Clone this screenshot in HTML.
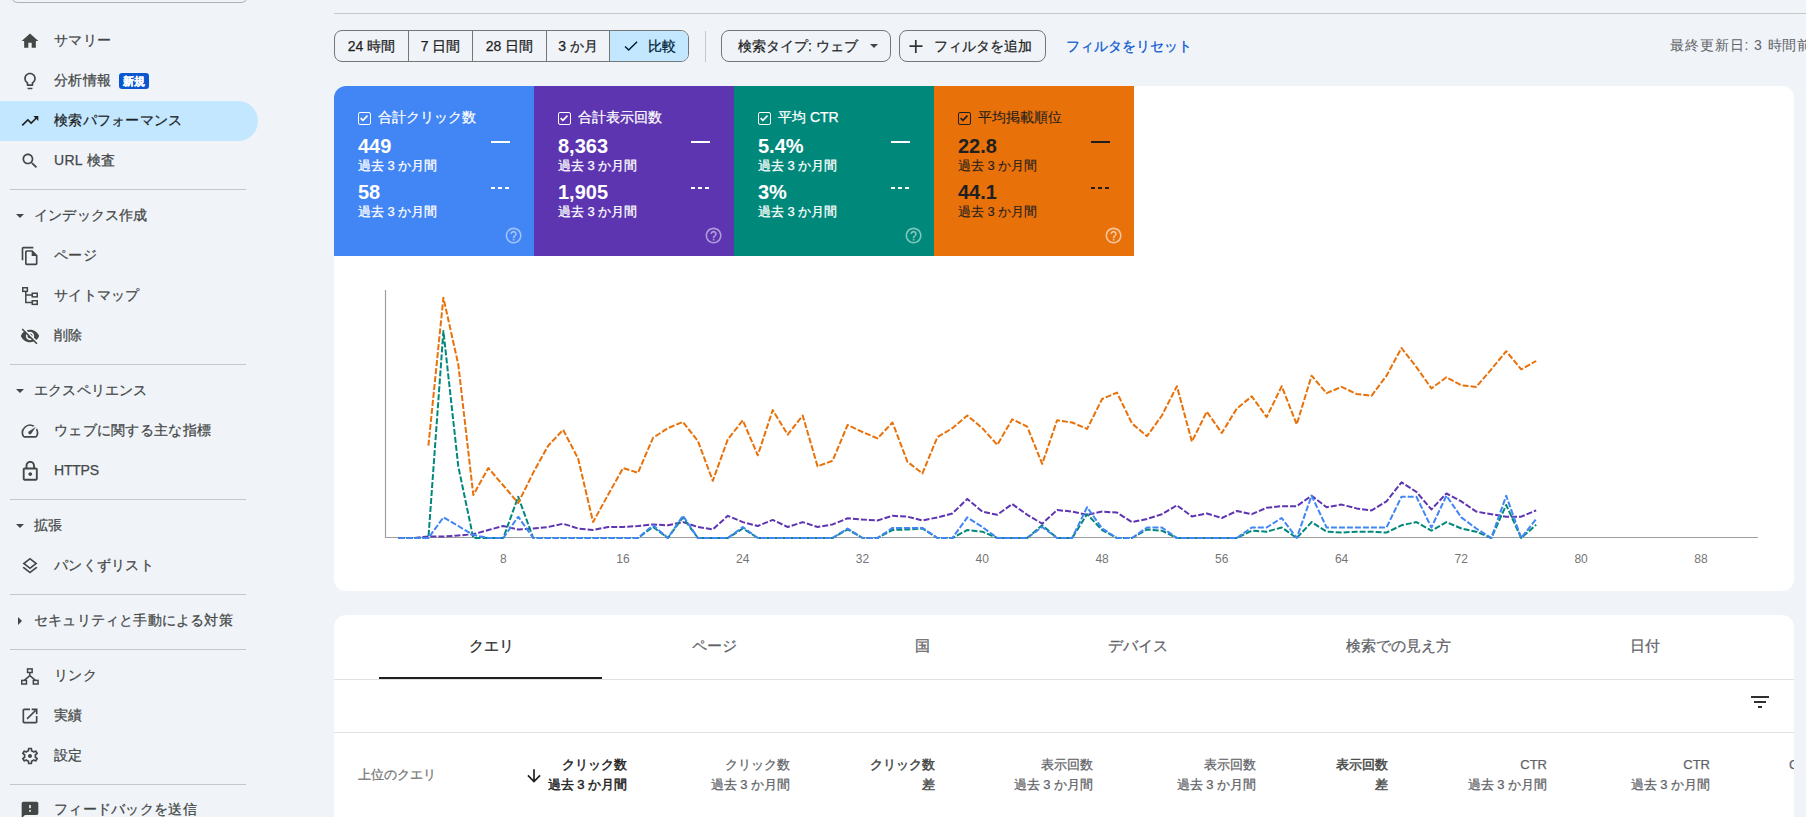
<!DOCTYPE html>
<html><head><meta charset="utf-8">
<style>
*{box-sizing:border-box}
html,body{margin:0;padding:0}
body{width:1806px;height:817px;overflow:hidden;position:relative;background:#f0f4f9;font-family:"Liberation Sans",sans-serif;color:#1f1f1f;-webkit-text-stroke-width:0.25px}
.abs{position:absolute}
.ic{position:absolute}
.topbox{position:absolute;left:10px;top:-40px;width:239px;height:43px;border:1px solid #aeb1ae;border-radius:8px}
.sep{position:absolute;left:10px;width:236px;height:1px;background:#c7c7c7}
.nitem{position:absolute;left:0;width:258px;height:40px}
.nitem.active{background:#c2e7ff;border-radius:0 20px 20px 0}
.nt{position:absolute;left:54px;top:-1px;line-height:40px;font-size:14px;color:#444746;white-space:nowrap;letter-spacing:0.3px}
.active .nt{color:#1f1f1f}
.badge{position:absolute;left:119px;top:12px;width:30px;height:16px;line-height:16px;text-align:center;background:#0b57d0;color:#fff;font-size:11px;font-weight:bold;border-radius:3px}
.nhead{position:absolute;left:0;width:258px;height:40px}
.nhead span{position:absolute;left:34px;top:0;line-height:40px;font-size:14px;color:#444746;white-space:nowrap;letter-spacing:0.2px}
.tri-d{position:absolute;left:16px;top:19px;width:0;height:0;border-left:4px solid transparent;border-right:4px solid transparent;border-top:4px solid #444746}
.tri-r{position:absolute;left:18px;top:17px;width:0;height:0;border-top:4px solid transparent;border-bottom:4px solid transparent;border-left:4px solid #444746}

.topline{position:absolute;left:334px;top:13px;width:1472px;height:1px;background:#c7c7c7}
.seg{position:absolute;top:30px;height:32px;border:1px solid #747775;border-radius:8px;overflow:hidden;display:flex}
.seg div{height:30px;line-height:30px;font-size:14px;color:#1f1f1f;text-align:center;border-right:1px solid #747775;white-space:nowrap;position:relative}
.seg div:last-child{border-right:none}
.btn{position:absolute;top:30px;height:32px;border:1px solid #747775;border-radius:8px;line-height:30px;font-size:14px;color:#1f1f1f;white-space:nowrap}
.vsep{position:absolute;left:705px;top:31px;width:1px;height:31px;background:#c7c7c7}
.link{position:absolute;left:1066px;top:30px;line-height:32px;font-size:14px;color:#0b57d0;white-space:nowrap}
.upd{position:absolute;left:1670px;top:29px;line-height:32px;font-size:14px;color:#5f6368;white-space:nowrap;-webkit-text-stroke-width:0;letter-spacing:0.9px}

.card{position:absolute;background:#fff;border-radius:12px}
.tile{position:absolute;top:86px;width:200px;height:170px;color:#fff}
.tile .cb{position:absolute;left:24px;top:26px;width:13px;height:13px;border:1.5px solid #fff;border-radius:2px}
.tile .cb svg{position:absolute;left:0;top:0}
.tile .tt{position:absolute;left:44px;top:21px;line-height:20px;font-size:14px;white-space:nowrap}
.tile .v{position:absolute;left:24px;line-height:24px;font-size:20px;font-weight:bold;white-space:nowrap;-webkit-text-stroke-width:0}
.tile .s{position:absolute;left:24px;line-height:16px;font-size:13px;white-space:nowrap}
.tile .l1{position:absolute;left:157px;top:55px;width:19px;height:2px;background:#fff}
.tile .l2{position:absolute;left:157px;top:101px;width:19px;height:2px;background:repeating-linear-gradient(90deg,#fff 0 4px,transparent 4px 7px)}
.tile .hp{position:absolute;left:169.6px;top:140px;fill:rgba(255,255,255,.5)}
.tile.dark{color:#1f1f1f}
.tile.dark .cb{border-color:#1f1f1f}
.tile.dark .tt,.tile.dark .s{-webkit-text-stroke-width:0.1px}
.tile.dark .l1{background:#1f1f1f}
.tile.dark .l2{background:repeating-linear-gradient(90deg,#1f1f1f 0 4px,transparent 4px 7px)}
.tile.dark .hp{fill:rgba(255,255,255,.6)}

svg.chart{position:absolute;left:0;top:0}
svg.chart text{font-family:"Liberation Sans",sans-serif;font-size:12px;fill:#757575;-webkit-text-stroke-width:0}

.tab{position:absolute;top:626px;height:40px;line-height:40px;font-size:15px;color:#5f6368;white-space:nowrap;text-align:center;width:300px}
.tab.on{color:#1f1f1f}
.uline{position:absolute;left:379px;top:677px;width:223px;height:2px;background:#202020}
.hline{position:absolute;left:334px;width:1460px;height:1px;background:#e0e0e0}
.th{position:absolute;top:755px;font-size:13px;line-height:20px;text-align:right;color:#5f6368;white-space:nowrap}
.th.b{color:#444746;-webkit-text-stroke-width:0.45px}
.th.b1{color:#1f1f1f;-webkit-text-stroke-width:0.45px}
</style></head><body>
<div class="topbox"></div>
<div class="nitem" style="top:21px"><svg class="ic" style="left:20px;top:10px" width="20" height="20" viewBox="0 0 24 24" fill="#444746"><path d="M10 20v-6h4v6h5v-8h3L12 3 2 12h3v8z"/></svg><span class="nt">サマリー</span></div>
<div class="nitem" style="top:61px"><svg class="ic" style="left:20px;top:10px" width="20" height="20" viewBox="0 0 24 24" fill="#444746"><path d="M9 21c0 .55.45 1 1 1h4c.55 0 1-.45 1-1v-1H9v1zm3-19C8.14 2 5 5.14 5 9c0 2.38 1.19 4.47 3 5.74V17c0 .55.45 1 1 1h6c.55 0 1-.45 1-1v-2.26c1.81-1.27 3-3.36 3-5.74 0-3.86-3.14-7-7-7zm2.85 11.1l-.85.6V16h-4v-2.3l-.85-.6C7.8 12.16 7 10.63 7 9c0-2.76 2.24-5 5-5s5 2.24 5 5c0 1.63-.8 3.16-2.15 4.1z"/></svg><span class="nt">分析情報</span><span class="badge">新規</span></div>
<div class="nitem active" style="top:101px"><svg class="ic" style="left:20px;top:10px" width="20" height="20" viewBox="0 0 24 24" fill="#1f1f1f"><path d="M16 6l2.29 2.29-4.88 4.88-4-4L2 16.59 3.41 18l6-6 4 4 6.3-6.29L22 12V6z"/></svg><span class="nt">検索パフォーマンス</span></div>
<div class="nitem" style="top:141px"><svg class="ic" style="left:20px;top:10px" width="20" height="20" viewBox="0 0 24 24" fill="#444746"><path d="M15.5 14h-.79l-.28-.27C15.41 12.59 16 11.11 16 9.5 16 5.91 13.09 3 9.5 3S3 5.91 3 9.5 5.91 16 9.5 16c1.61 0 3.09-.59 4.23-1.57l.27.28v.79l5 4.99L20.49 19l-4.99-5zm-6 0C7.01 14 5 11.99 5 9.5S7.01 5 9.5 5 14 7.01 14 9.5 11.99 14 9.5 14z"/></svg><span class="nt">URL 検査</span></div>
<div class="sep" style="top:189px"></div>
<div class="nhead" style="top:195px"><div class="tri-d"></div><span>インデックス作成</span></div>
<div class="nitem" style="top:236px"><svg class="ic" style="left:20px;top:10px" width="20" height="20" viewBox="0 0 24 24" fill="#444746"><path d="M16 1H4c-1.1 0-2 .9-2 2v14h2V3h12V1zm-1 4H8c-1.1 0-1.99.9-1.99 2L6 21c0 1.1.89 2 1.99 2H19c1.1 0 2-.9 2-2V11l-6-6zM8 21V7h6v5h5v9H8z"/></svg><span class="nt">ページ</span></div>
<div class="nitem" style="top:276px"><svg class="ic" style="left:20px;top:10px" width="20" height="20" viewBox="0 0 20 20" fill="#444746" stroke="#444746"><g fill="none" stroke-width="1.5"><rect x="2.75" y="1.75" width="4.6" height="3.6"/><rect x="12.25" y="7.25" width="5" height="3.6"/><rect x="12.25" y="14.75" width="5" height="3.6"/><path d="M5.8 5.3V16.6H12.2M5.8 9.1H12.2"/></g></svg><span class="nt">サイトマップ</span></div>
<div class="nitem" style="top:316px"><svg class="ic" style="left:20px;top:10px" width="20" height="20" viewBox="0 0 24 24" fill="#444746"><path d="M12 7c2.76 0 5 2.24 5 5 0 .65-.13 1.26-.36 1.83l2.92 2.92c1.51-1.26 2.7-2.89 3.43-4.75-1.73-4.39-6-7.5-11-7.5-1.4 0-2.74.25-3.98.7l2.16 2.16C10.74 7.13 11.35 7 12 7zM2 4.27l2.28 2.28.46.46C3.08 8.3 1.78 10.02 1 12c1.730 4.39 6 7.5 11 7.5 1.55 0 3.03-.3 4.38-.84l.42.42L19.73 22 21 20.73 3.27 3 2 4.27zM7.53 9.8l1.55 1.55c-.05.21-.08.43-.08.65 0 1.66 1.34 3 3 3 .22 0 .44-.03.65-.08l1.55 1.55c-.67.33-1.41.53-2.2.53-2.76 0-5-2.24-5-5 0-.79.2-1.530.53-2.2zm4.31-.78l3.15 3.150.02-.16c0-1.66-1.34-3-3-3l-.17.01z"/></svg><span class="nt">削除</span></div>
<div class="sep" style="top:364px"></div>
<div class="nhead" style="top:370px"><div class="tri-d"></div><span>エクスペリエンス</span></div>
<div class="nitem" style="top:411px"><svg class="ic" style="left:20px;top:10px" width="20" height="20" viewBox="0 0 24 24" fill="#444746"><path d="M20.38 8.57l-1.23 1.85a8 8 0 0 1-.22 7.58H5.07A8 8 0 0 1 15.58 6.85l1.85-1.23A10 10 0 0 0 3.35 19a2 2 0 0 0 1.72 1h13.85a2 2 0 0 0 1.74-1 10 10 0 0 0-.27-10.44zm-9.79 6.84a2 2 0 0 0 2.830 0l5.66-8.49-8.49 5.66a2 2 0 0 0 0 2.83z"/></svg><span class="nt">ウェブに関する主な指標</span></div>
<div class="nitem" style="top:451px"><svg class="ic" style="left:18.85px;top:8.9px" width="22.5" height="22.5" viewBox="0 0 24 24" fill="#444746"><path d="M18 8h-1V6c0-2.76-2.24-5-5-5S7 3.24 7 6v2H6c-1.1 0-2 .9-2 2v10c0 1.1.9 2 2 2h12c1.1 0 2-.9 2-2V10c0-1.1-.9-2-2-2zM9 6c0-1.66 1.34-3 3-3s3 1.34 3 3v2H9V6zm9 14H6V10h12v10zm-6-3c1.1 0 2-.9 2-2s-.9-2-2-2-2 .9-2 2 .9 2 2 2z"/></svg><span class="nt" style="letter-spacing:-0.2px">HTTPS</span></div>
<div class="sep" style="top:499px"></div>
<div class="nhead" style="top:505px"><div class="tri-d"></div><span>拡張</span></div>
<div class="nitem" style="top:546px"><svg class="ic" style="left:20px;top:10px" width="20" height="20" viewBox="0 0 24 24" fill="#444746"><path d="M11.99 18.54l-7.37-5.73L3 14.07l9 7 9-7-1.63-1.27-7.38 5.74zM12 16l7.36-5.73L21 9l-9-7-9 7 1.63 1.27L12 16zm0-11.47L17.740 9 12 13.47 6.26 9 12 4.53z"/></svg><span class="nt">パンくずリスト</span></div>
<div class="sep" style="top:594px"></div>
<div class="nhead" style="top:600px"><div class="tri-r"></div><span>セキュリティと手動による対策</span></div>
<div class="sep" style="top:649px"></div>
<div class="nitem" style="top:656px"><svg class="ic" style="left:20px;top:10px" width="20" height="20" viewBox="0 0 20 20" fill="#444746" stroke="#444746"><g fill="none" stroke-width="1.5"><rect x="7.55" y="2.9" width="4.6" height="3.6"/><rect x="1.75" y="14.4" width="4.7" height="3.6"/><rect x="13.35" y="14.4" width="4.7" height="3.6"/><path d="M9.85 6.5V9.6L4.3 14.4M9.85 9.6L15.5 14.4"/></g></svg><span class="nt">リンク</span></div>
<div class="nitem" style="top:696px"><svg class="ic" style="left:20px;top:10px" width="20" height="20" viewBox="0 0 24 24" fill="#444746"><path d="M19 19H5V5h7V3H5c-1.11 0-2 .9-2 2v14c0 1.1.89 2 2 2h14c1.1 0 2-.9 2-2v-7h-2v7zM14 3v2h3.59l-9.83 9.83 1.41 1.41L19 6.41V10h2V3h-7z"/></svg><span class="nt">実績</span></div>
<div class="nitem" style="top:736px"><svg class="ic" style="left:20px;top:10px" width="20" height="20" viewBox="0 0 24 24" fill="#444746"><path d="M19.43 12.98c.04-.32.07-.64.07-.98 0-.34-.03-.66-.07-.98l2.11-1.65c.19-.15.24-.42.12-.64l-2-3.46c-.09-.16-.26-.25-.44-.25-.06 0-.12.01-.17.03l-2.49 1c-.52-.4-1.08-.73-1.69-.98l-.38-2.65C14.46 2.18 14.25 2 14 2h-4c-.25 0-.46.18-.49.42l-.38 2.65c-.61.25-1.17.59-1.69.98l-2.49-1c-.06-.02-.12-.03-.18-.03-.17 0-.34.09-.43.25l-2 3.46c-.13.22-.07.49.12.64l2.11 1.65c-.04.32-.07.65-.07.98 0 .33.03.66.07.98l-2.11 1.65c-.19.15-.24.42-.12.64l2 3.46c.09.16.26.25.44.25.06 0 .12-.01.17-.03l2.49-1c.52.4 1.08.73 1.69.98l.38 2.65c.03.24.24.42.49.42h4c.25 0 .46-.18.49-.42l.38-2.65c.61-.25 1.17-.59 1.69-.98l2.49 1c.06.02.12.03.18.03.17 0 .34-.09.43-.25l2-3.46c.12-.22.07-.49-.12-.64l-2.11-1.65zm-1.98-1.71c.04.31.05.52.05.73 0 .21-.02.43-.05.73l-.14 1.13.89.7 1.08.84-.7 1.21-1.27-.51-1.04-.42-.9.68c-.43.32-.84.56-1.25.73l-1.06.43-.16 1.13-.2 1.35h-1.4l-.19-1.35-.16-1.13-1.06-.43c-.43-.18-.83-.41-1.23-.71l-.91-.7-1.06.43-1.27.51-.7-1.21 1.08-.84.89-.7-.14-1.13c-.03-.31-.05-.54-.05-.74s.02-.43.05-.73l.14-1.13-.89-.7-1.08-.84.7-1.21 1.27.51 1.04.42.9-.68c.43-.32.84-.56 1.25-.73l1.06-.43.16-1.13.2-1.35h1.39l.19 1.35.16 1.13 1.06.43c.43.18.83.41 1.23.71l.91.7 1.06-.43 1.27-.51.7 1.21-1.07.85-.89.7.14 1.13zM12 9.6c-1.33 0-2.4 1.07-2.4 2.4s1.07 2.4 2.4 2.4 2.4-1.07 2.4-2.4-1.07-2.4-2.4-2.4z"/></svg><span class="nt">設定</span></div>
<div class="sep" style="top:784px"></div>
<div class="nitem" style="top:790px"><svg class="ic" style="left:20px;top:10px" width="20" height="20" viewBox="0 0 24 24" fill="#444746"><path d="M20 2H4c-1.1 0-1.99.9-1.99 2L2 22l4-4h14c1.1 0 2-.9 2-2V4c0-1.1-.9-2-2-2zm-7 12h-2v-2h2v2zm0-4h-2V6h2v4z"/></svg><span class="nt">フィードバックを送信</span></div>

<div class="topline"></div>
<div class="seg" style="left:334px;width:355px">
  <div style="width:74px">24 時間</div>
  <div style="width:64px">7 日間</div>
  <div style="width:74px">28 日間</div>
  <div style="width:63px">3 か月</div>
  <div style="width:78px;background:#c2e7ff;color:#001d35"><svg style="position:absolute;left:12.3px;top:5.7px" width="17.8" height="17.8" viewBox="0 0 24 24"><path d="M9 16.17L4.83 12l-1.42 1.41L9 19 21 7l-1.41-1.41z" fill="#001d35"/></svg><span style="position:absolute;left:38px">比較</span></div>
</div>
<div class="vsep"></div>
<div class="btn" style="left:721px;width:170px"><span style="position:absolute;left:16px">検索タイプ: ウェブ</span><div style="position:absolute;left:148px;top:13px;border-left:4px solid transparent;border-right:4px solid transparent;border-top:4px solid #444746"></div></div>
<div class="btn" style="left:899px;width:147px"><svg style="position:absolute;left:9px;top:9px" width="14" height="13" viewBox="0 0 14 13"><path d="M0.5 6.2H13.5M6.8 0V13" stroke="#333" stroke-width="1.7"/></svg><span style="position:absolute;left:34px">フィルタを追加</span></div>
<div class="link">フィルタをリセット</div>
<div class="upd">最終更新日: 3 時間前</div>

<div class="card" style="left:334px;top:86px;width:1460px;height:505px"></div>
<div class="card" style="left:334px;top:615px;width:1460px;height:260px"></div>

<div class="tile" style="left:334px;background:#4285f4;border-top-left-radius:12px">
 <div class="cb"><svg width="10" height="10" viewBox="0 0 10 10"><path d="M1.6 5.2L3.9 7.4L8.5 2.6" fill="none" stroke="#fff" stroke-width="1.6"/></svg></div>
 <div class="tt">合計クリック数</div>
 <div class="v" style="top:48px">449</div><div class="s" style="top:72px">過去 3 か月間</div>
 <div class="v" style="top:94px">58</div><div class="s" style="top:118px">過去 3 か月間</div>
 <div class="l1"></div><div class="l2"></div><svg class="hp" width="19.2" height="19.2" viewBox="0 0 24 24"><path d="M11 18h2v-2h-2v2zm1-16C6.48 2 2 6.480 2 12s4.48 10 10 10 10-4.48 10-10S17.520 2 12 2zm0 18c-4.41 0-8-3.59-8-8s3.59-8 8-8 8 3.59 8 8-3.59 8-8 8zm0-14c-2.21 0-4 1.79-4 4h2c0-1.1.9-2 2-2s2 .9 2 2c0 2-3 1.75-3 5h2c0-2.25 3-2.5 3-5 0-2.21-1.79-4-4-4z"/></svg>
</div>
<div class="tile" style="left:534px;background:#5e35b1">
 <div class="cb"><svg width="10" height="10" viewBox="0 0 10 10"><path d="M1.6 5.2L3.9 7.4L8.5 2.6" fill="none" stroke="#fff" stroke-width="1.6"/></svg></div>
 <div class="tt">合計表示回数</div>
 <div class="v" style="top:48px">8,363</div><div class="s" style="top:72px">過去 3 か月間</div>
 <div class="v" style="top:94px">1,905</div><div class="s" style="top:118px">過去 3 か月間</div>
 <div class="l1"></div><div class="l2"></div><svg class="hp" width="19.2" height="19.2" viewBox="0 0 24 24"><path d="M11 18h2v-2h-2v2zm1-16C6.48 2 2 6.480 2 12s4.48 10 10 10 10-4.48 10-10S17.520 2 12 2zm0 18c-4.41 0-8-3.59-8-8s3.59-8 8-8 8 3.59 8 8-3.59 8-8 8zm0-14c-2.21 0-4 1.79-4 4h2c0-1.1.9-2 2-2s2 .9 2 2c0 2-3 1.75-3 5h2c0-2.25 3-2.5 3-5 0-2.21-1.79-4-4-4z"/></svg>
</div>
<div class="tile" style="left:734px;background:#00897b">
 <div class="cb"><svg width="10" height="10" viewBox="0 0 10 10"><path d="M1.6 5.2L3.9 7.4L8.5 2.6" fill="none" stroke="#fff" stroke-width="1.6"/></svg></div>
 <div class="tt">平均 CTR</div>
 <div class="v" style="top:48px">5.4%</div><div class="s" style="top:72px">過去 3 か月間</div>
 <div class="v" style="top:94px">3%</div><div class="s" style="top:118px">過去 3 か月間</div>
 <div class="l1"></div><div class="l2"></div><svg class="hp" width="19.2" height="19.2" viewBox="0 0 24 24"><path d="M11 18h2v-2h-2v2zm1-16C6.48 2 2 6.480 2 12s4.48 10 10 10 10-4.48 10-10S17.520 2 12 2zm0 18c-4.41 0-8-3.59-8-8s3.59-8 8-8 8 3.59 8 8-3.59 8-8 8zm0-14c-2.21 0-4 1.79-4 4h2c0-1.1.9-2 2-2s2 .9 2 2c0 2-3 1.75-3 5h2c0-2.25 3-2.5 3-5 0-2.21-1.79-4-4-4z"/></svg>
</div>
<div class="tile dark" style="left:934px;background:#e8710a">
 <div class="cb"><svg width="10" height="10" viewBox="0 0 10 10"><path d="M1.6 5.2L3.9 7.4L8.5 2.6" fill="none" stroke="#1f1f1f" stroke-width="1.6"/></svg></div>
 <div class="tt">平均掲載順位</div>
 <div class="v" style="top:48px">22.8</div><div class="s" style="top:72px">過去 3 か月間</div>
 <div class="v" style="top:94px">44.1</div><div class="s" style="top:118px">過去 3 か月間</div>
 <div class="l1"></div><div class="l2"></div><svg class="hp" width="19.2" height="19.2" viewBox="0 0 24 24"><path d="M11 18h2v-2h-2v2zm1-16C6.48 2 2 6.480 2 12s4.48 10 10 10 10-4.48 10-10S17.520 2 12 2zm0 18c-4.41 0-8-3.59-8-8s3.59-8 8-8 8 3.59 8 8-3.59 8-8 8zm0-14c-2.21 0-4 1.79-4 4h2c0-1.1.9-2 2-2s2 .9 2 2c0 2-3 1.75-3 5h2c0-2.25 3-2.5 3-5 0-2.21-1.79-4-4-4z"/></svg>
</div>

<svg class="chart" width="1806" height="817" viewBox="0 0 1806 817">
<line x1="385.5" y1="290" x2="385.5" y2="538" stroke="#9e9e9e" stroke-width="1.2"/>
<line x1="385" y1="537.5" x2="1758" y2="537.5" stroke="#9e9e9e" stroke-width="1.2"/>
<path d="M398.5,538.0 L413.4,538.0 L428.4,536.5 L443.4,536.5 L458.3,535.5 L473.3,534.2 L488.3,530.0 L503.3,526.0 L518.2,529.5 L533.2,528.5 L548.2,527.0 L563.1,523.7 L578.1,528.5 L593.1,530.0 L608.0,527.0 L623.0,527.0 L638.0,526.0 L653.0,524.4 L667.9,525.3 L682.9,522.1 L697.9,527.0 L712.8,529.5 L727.8,515.8 L742.8,522.1 L757.8,526.0 L772.7,519.9 L787.7,527.0 L802.7,522.1 L817.6,527.0 L832.6,524.4 L847.6,518.3 L862.5,519.6 L877.5,520.5 L892.5,515.8 L907.4,516.7 L922.4,520.5 L937.4,517.4 L952.4,513.5 L967.3,498.9 L982.3,511.6 L997.3,514.8 L1012.2,504.0 L1027.2,514.8 L1042.2,523.7 L1057.1,510.0 L1072.1,511.6 L1087.1,514.8 L1102.1,511.6 L1117.0,512.6 L1132.0,522.1 L1147.0,519.0 L1161.9,514.2 L1176.9,505.3 L1191.9,516.4 L1206.8,513.5 L1221.8,518.0 L1236.8,511.0 L1251.8,514.2 L1266.7,507.8 L1281.7,506.2 L1296.7,506.2 L1311.6,495.7 L1326.6,507.2 L1341.6,504.6 L1356.5,508.4 L1371.5,510.4 L1386.5,501.4 L1401.5,482.3 L1416.4,491.9 L1431.4,509.4 L1446.4,493.5 L1461.3,501.4 L1476.3,511.6 L1491.3,514.2 L1506.2,516.7 L1521.2,516.7 L1536.2,510.3" fill="none" stroke="#5e35b1" stroke-width="2" stroke-dasharray="6 2" stroke-linejoin="round"/>
<path d="M398.5,538.0 L413.4,538.0 L428.4,538.0 L443.4,331.0 L458.3,466.4 L473.3,538.0 L488.3,538.0 L503.3,538.0 L518.2,496.7 L533.2,538.0 L548.2,538.0 L563.1,538.0 L578.1,538.0 L593.1,538.0 L608.0,538.0 L623.0,538.0 L638.0,538.0 L653.0,527.0 L667.9,538.0 L682.9,517.4 L697.9,538.0 L712.8,538.0 L727.8,538.0 L742.8,528.5 L757.8,538.0 L772.7,538.0 L787.7,538.0 L802.7,538.0 L817.6,538.0 L832.6,538.0 L847.6,529.5 L862.5,538.0 L877.5,538.0 L892.5,530.0 L907.4,529.5 L922.4,528.5 L937.4,538.0 L952.4,538.0 L967.3,530.0 L982.3,531.7 L997.3,538.0 L1012.2,538.0 L1027.2,538.0 L1042.2,525.3 L1057.1,538.0 L1072.1,538.0 L1087.1,514.2 L1102.1,530.0 L1117.0,538.0 L1132.0,538.0 L1147.0,529.5 L1161.9,530.7 L1176.9,538.0 L1191.9,538.0 L1206.8,538.0 L1221.8,538.0 L1236.8,538.0 L1251.8,530.7 L1266.7,531.7 L1281.7,527.5 L1296.7,538.0 L1311.6,522.1 L1326.6,531.7 L1341.6,532.6 L1356.5,531.7 L1371.5,531.7 L1386.5,532.6 L1401.5,525.3 L1416.4,522.1 L1431.4,530.7 L1446.4,522.1 L1461.3,528.5 L1476.3,531.7 L1491.3,538.0 L1506.2,505.0 L1521.2,538.0 L1536.2,524.7" fill="none" stroke="#00897b" stroke-width="2" stroke-dasharray="6 2" stroke-linejoin="round"/>
<path d="M398.5,538.0 L413.4,538.0 L428.4,538.0 L443.4,517.4 L458.3,526.0 L473.3,535.0 L488.3,538.0 L503.3,538.0 L518.2,516.7 L533.2,538.0 L548.2,538.0 L563.1,538.0 L578.1,538.0 L593.1,538.0 L608.0,538.0 L623.0,538.0 L638.0,538.0 L653.0,525.3 L667.9,538.0 L682.9,515.8 L697.9,538.0 L712.8,538.0 L727.8,538.0 L742.8,527.0 L757.8,538.0 L772.7,538.0 L787.7,538.0 L802.7,538.0 L817.6,538.0 L832.6,538.0 L847.6,528.5 L862.5,538.0 L877.5,538.0 L892.5,527.9 L907.4,527.9 L922.4,527.9 L937.4,538.0 L952.4,538.0 L967.3,517.4 L982.3,527.0 L997.3,538.0 L1012.2,538.0 L1027.2,538.0 L1042.2,527.0 L1057.1,538.0 L1072.1,538.0 L1087.1,507.2 L1102.1,528.5 L1117.0,538.0 L1132.0,538.0 L1147.0,527.5 L1161.9,527.5 L1176.9,538.0 L1191.9,538.0 L1206.8,538.0 L1221.8,538.0 L1236.8,538.0 L1251.8,527.5 L1266.7,527.5 L1281.7,518.0 L1296.7,538.0 L1311.6,495.7 L1326.6,527.5 L1341.6,527.5 L1356.5,527.5 L1371.5,527.5 L1386.5,527.5 L1401.5,496.7 L1416.4,496.7 L1431.4,527.5 L1446.4,495.7 L1461.3,517.4 L1476.3,528.5 L1491.3,538.0 L1506.2,495.7 L1521.2,538.0 L1536.2,519.0" fill="none" stroke="#4285f4" stroke-width="2" stroke-dasharray="6 2" stroke-linejoin="round"/>
<path d="M428.4,445.7 L443.4,297.7 L458.3,364.6 L473.3,495.0 L488.3,468.0 L503.3,485.5 L518.2,503.0 L533.2,472.8 L548.2,445.7 L563.1,429.8 L578.1,458.5 L593.1,522.0 L608.0,495.0 L623.0,468.0 L638.0,472.8 L653.0,437.8 L667.9,428.2 L682.9,421.9 L697.9,441.0 L712.8,480.8 L727.8,439.4 L742.8,420.3 L757.8,455.3 L772.7,410.1 L787.7,434.6 L802.7,415.5 L817.6,466.4 L832.6,460.7 L847.6,425.0 L862.5,432.0 L877.5,438.4 L892.5,422.5 L907.4,461.7 L922.4,473.4 L937.4,437.1 L952.4,428.2 L967.3,415.5 L982.3,428.2 L997.3,444.8 L1012.2,419.3 L1027.2,426.6 L1042.2,463.9 L1057.1,420.3 L1072.1,422.5 L1087.1,428.9 L1102.1,399.0 L1117.0,392.6 L1132.0,423.5 L1147.0,436.2 L1161.9,415.5 L1176.9,386.2 L1191.9,441.6 L1206.8,411.7 L1221.8,433.0 L1236.8,408.5 L1251.8,396.4 L1266.7,417.1 L1281.7,386.2 L1296.7,424.4 L1311.6,375.7 L1326.6,393.2 L1341.6,386.9 L1356.5,393.9 L1371.5,395.8 L1386.5,375.7 L1401.5,348.0 L1416.4,367.1 L1431.4,388.4 L1446.4,377.3 L1461.3,385.3 L1476.3,386.9 L1491.3,369.3 L1506.2,351.2 L1521.2,369.3 L1536.2,361.0" fill="none" stroke="#e8710a" stroke-width="2" stroke-dasharray="6 2" stroke-linejoin="round"/>

<text x="503.3" y="563" text-anchor="middle">8</text><text x="623.0" y="563" text-anchor="middle">16</text><text x="742.8" y="563" text-anchor="middle">24</text><text x="862.5" y="563" text-anchor="middle">32</text><text x="982.3" y="563" text-anchor="middle">40</text><text x="1102.1" y="563" text-anchor="middle">48</text><text x="1221.8" y="563" text-anchor="middle">56</text><text x="1341.6" y="563" text-anchor="middle">64</text><text x="1461.3" y="563" text-anchor="middle">72</text><text x="1581.1" y="563" text-anchor="middle">80</text><text x="1700.9" y="563" text-anchor="middle">88</text>
</svg>

<div class="tab on" style="left:341px">クエリ</div>
<div class="tab" style="left:564px">ページ</div>
<div class="tab" style="left:772px">国</div>
<div class="tab" style="left:988px">デバイス</div>
<div class="tab" style="left:1248px">検索での見え方</div>
<div class="tab" style="left:1495px">日付</div>
<div class="hline" style="top:679px"></div>
<div class="uline"></div>
<svg class="ic" style="left:1748px;top:690px" width="24" height="24" viewBox="0 0 24 24"><path d="M10 18h4v-2h-4v2zM3 6v2h18V6H3zm3 7h12v-2H6v2z" fill="#303030"/></svg>
<div class="hline" style="top:732px"></div>
<div class="abs" style="left:358px;top:765px;line-height:20px;font-size:13px;color:#757575">上位のクエリ</div>
<svg class="ic" style="left:524px;top:766px" width="20" height="20" viewBox="0 0 24 24"><path d="M20 12l-1.41-1.41L13 16.17V4h-2v12.17l-5.58-5.59L4 12l8 8 8-8z" fill="#1f1f1f"/></svg>
<div class="th b1" style="right:1179px">クリック数<br>過去 3 か月間</div>
<div class="th" style="right:1016px">クリック数<br>過去 3 か月間</div>
<div class="th b" style="right:871px">クリック数<br>差</div>
<div class="th" style="right:713px">表示回数<br>過去 3 か月間</div>
<div class="th" style="right:550px">表示回数<br>過去 3 か月間</div>
<div class="th b" style="right:418px">表示回数<br>差</div>
<div class="th" style="right:259px">CTR<br>過去 3 か月間</div>
<div class="th" style="right:96px">CTR<br>過去 3 か月間</div>
<div class="abs" style="left:1789px;top:755px;width:5px;height:22px;overflow:hidden"><div class="th" style="left:0;top:0">CTR</div></div>
</body></html>
